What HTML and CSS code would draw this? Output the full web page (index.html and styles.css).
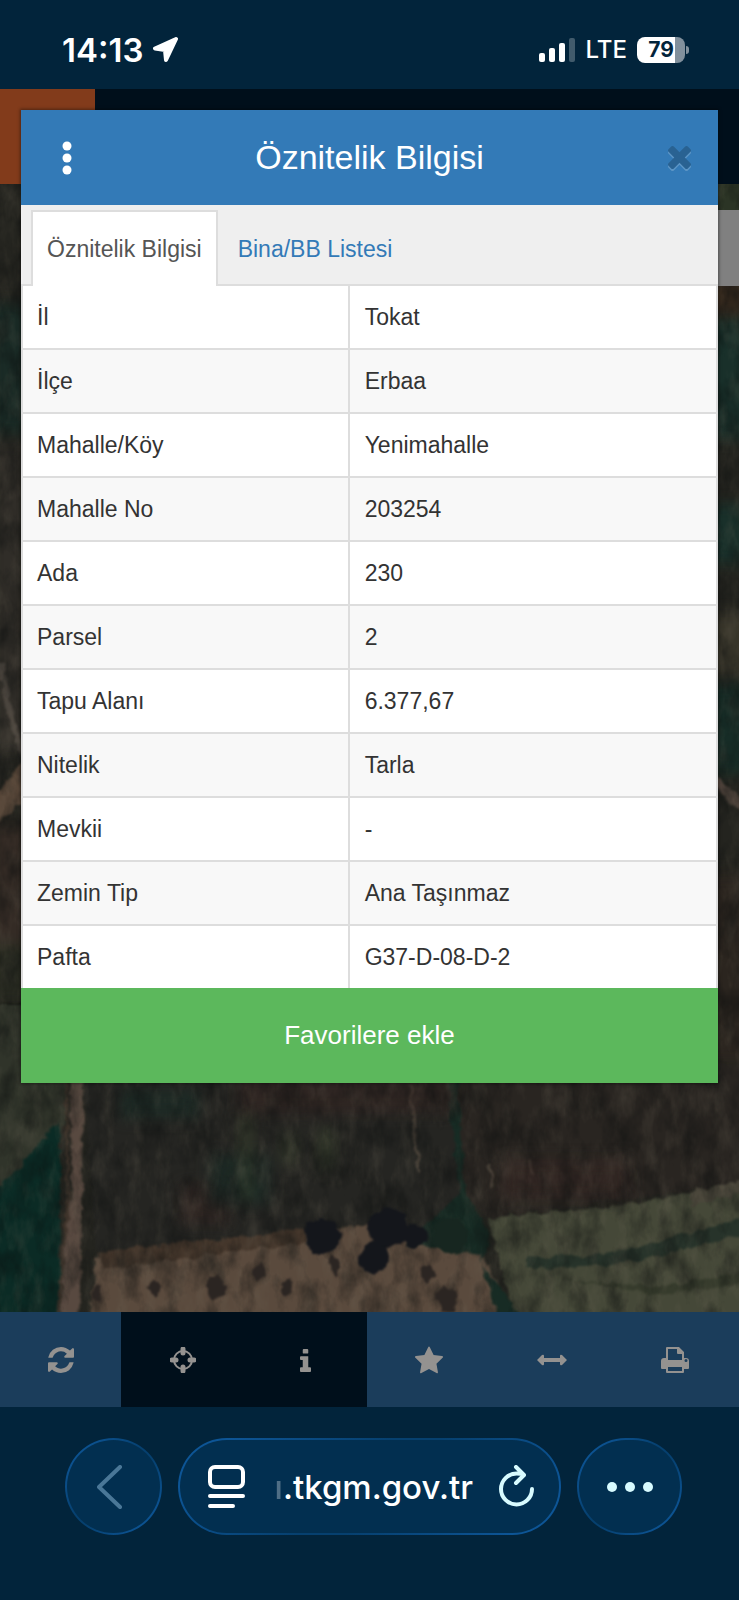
FILE: index.html
```html
<!DOCTYPE html>
<html lang="tr">
<head>
<meta charset="UTF-8">
<meta name="viewport" content="width=device-width, initial-scale=1.0">
<title>Öznitelik Bilgisi</title>
<link rel="stylesheet" href="styles.css">
</head>
<body>

  <header class="status-bar">
    <div class="status-group">
      <span class="clock">14:13</span>
      <svg class="location" viewBox="0 0 25 25"><path d="M23 2 2 11.500 12 13 13 23z"/></svg>
    </div>
    <div class="status-group">
      <svg class="signal" viewBox="0 0 37 24">
        <rect x="0" y="15" width="6" height="9" rx="2"/>
        <rect x="10" y="10" width="6" height="14" rx="2"/>
        <rect x="20" y="5" width="6" height="19" rx="2"/>
        <rect x="30" y="0" width="6" height="24" rx="2" opacity=".25"/>
      </svg>
      <span class="network">LTE</span>
      <div class="battery"><span>79</span></div>
    </div>
  </header>

  <main class="app">
    <div class="navbar"><div class="navbar-logo"></div></div>

    <div class="map">
      <svg class="map-image" viewBox="0 0 739 1128" preserveAspectRatio="xMidYMid slice" aria-hidden="true">
        <defs>
          <filter id="soft" x="-10%" y="-10%" width="120%" height="120%" color-interpolation-filters="sRGB"><feGaussianBlur stdDeviation="7"/></filter>
          <filter id="rough" x="-5%" y="-5%" width="110%" height="110%" color-interpolation-filters="sRGB">
            <feTurbulence type="fractalNoise" baseFrequency="0.09" numOctaves="3" seed="4"/>
            <feDisplacementMap in="SourceGraphic" scale="9" xChannelSelector="R" yChannelSelector="G"/>
            <feGaussianBlur stdDeviation="1"/>
          </filter>
          <filter id="grain" x="0" y="0" width="100%" height="100%" color-interpolation-filters="sRGB">
            <feTurbulence type="fractalNoise" baseFrequency="0.07 0.03" numOctaves="4" seed="8"/>
            <feColorMatrix values="0 0 0 0 0.45  0 0 0 0 0.42  0 0 0 0 0.36  1.6 0 0 0 -0.7"/>
          </filter>
          <filter id="shade" x="0" y="0" width="100%" height="100%" color-interpolation-filters="sRGB">
            <feTurbulence type="fractalNoise" baseFrequency="0.05 0.03" numOctaves="4" seed="21"/>
            <feColorMatrix values="0 0 0 0 0.04  0 0 0 0 0.05  0 0 0 0 0.05  0 2 0 0 -0.8"/>
          </filter>
        </defs>
        <rect width="739" height="1128" fill="#24241f"/>

        <!-- side strips -->
        <g filter="url(#soft)">
          <path fill="#1a2b26" d="M-10 120h40v130h-40z"/>
          <path fill="#302d28" d="M-10 260h40v310h-40z"/>
          <path fill="#342b25" d="M-10 640h40v120h-40z"/>
          <path fill="#2a2c22" d="M-10 760h50v60h-50z"/>
          <path fill="#2b3425" d="M700-10h50v50h-50z"/>
          <path fill="#3b2d20" d="M700 95h50v35h-50z"/>
          <path fill="#19302a" d="M700 135h50v120h-50zM700 320h50v60h-50z"/>
          <path fill="#38352a" d="M700 430h50v60h-50z"/>
          <path fill="#172d27" d="M700 500h50v90h-50z"/>
          <path fill="#2b251f" d="M700 690h50v190h-50z"/>
        </g>
        <g filter="url(#rough)">
          <path fill="#584739" d="M-4 608 26 576v40L-4 640z"/>
          <path fill="none" stroke="#4b453e" stroke-width="6" d="M0 480q12 60 22 90"/>
          <path fill="#5a4c43" d="m712 588 34 30v16l-34-34z"/>
          <path fill="#161a14" d="M0 818h30v4H0z"/>
        </g>

        <!-- fields below the dialog -->
        <g filter="url(#rough)">
          <path fill="#30342a" d="M-5 820h70v120L20 990l-25 20z"/>
          <path fill="#0b2b25" d="M-5 1005 15 988l45-52v200H-5z"/>
          <path fill="#252522" d="M82 880h380v190l-95-30-270 34z"/>
          <path fill="#292521" d="M460 880h290v118l-262 36-30-30z"/>
          <path fill="#5a4a3d" d="M95 1074 230 1058 370 1040 480 1064 516 1140H90z"/>
          <path fill="#44362b" d="M97 1068 230 1054 305 1044v14L105 1085z"/>
          <path fill="#454838" d="M488 1034 600 1024 745 1000v140H516z"/>
          <path fill="#4b473b" d="m690 1008 55-12v12l-55 14z"/>
          <path fill="#27332a" d="M525 1072q70 4 130-14l90-24v16l-88 22q-70 16-132 10z"/>
          <path fill="#363b2c" d="m560 1095 100 8 84-14v10l-84 12z"/>
          <path fill="#172b24" d="m456 890 10 120 24 40-8 30 44 60h-26l-20-70-75-10 55-50-12-110z"/>
          <path fill="#584940" d="M70 880h13l-1 150-3 110H61l5-100 6-40z"/>
          <path fill="none" stroke="#3f342b" stroke-width="3" d="M66 880l2 130-9 120"/>
          <path fill="none" stroke="#4e463c" stroke-width="3" d="m410 900 6 60 4 28M490 980l3 22M528 976l4 14"/>
        </g>
        <g filter="url(#soft)">
          <path fill="#362723" opacity=".6" d="M235 890h220v40H235zM180 1000h50v40h-50zM500 975h130v40H500z"/>
          <path fill="#1b2b25" opacity=".8" d="M120 905h80v30h-80zM210 970h60v50h-60z"/>
          <path fill="#3c4630" opacity=".6" d="M282 950h14v30h-14zM318 945h16v40h-16zM240 930h12v85h-12z"/>
        </g>
        <rect width="739" height="1128" filter="url(#grain)" opacity=".3"/>
        <rect width="739" height="1128" filter="url(#shade)" opacity=".5"/>
        <g filter="url(#rough)" fill="#14161b">
          <circle cx="322" cy="1052" r="18"/>
          <circle cx="388" cy="1044" r="20"/>
          <circle cx="374" cy="1074" r="15"/>
          <circle cx="414" cy="1052" r="12"/>
          <circle cx="450" cy="1052" r="18" fill="#172620"/>
        </g>
        <g filter="url(#rough)" fill="#2b2522">
          <path d="m206 1098 10-8 6 6 4 14-12 8-8-8zM148 1104l6-10 6 8-4 12zM252 1088l8-8 6 10-8 6zM328 1078l6-6 8 12-6 10zM280 1098l10-4 4 16-12 2zM96 1100l6 4-4 14-6-4zM420 1088l8-10 10 14-12 8zM434 1110l10-8 14 6-4 18h-12z"/>
        </g>
      </svg>
      <div class="map-panel"></div>
    </div>

    <nav class="toolbar" aria-label="Harita araçları">
      <button type="button" class="tool" aria-label="Yenile">
        <svg width="26" height="26" viewBox="0 128 1536 1536" fill="currentColor"><path d="M1511 1056q0 5-1 7-64 268-268 434.500t-478 166.500q-146 0-282.500-55t-243.500-157l-129 129q-19 19-45 19t-45-19-19-45v-448q0-26 19-45t45-19h448q26 0 45 19t19 45-19 45l-137 137q71 66 161 102t187 36q134 0 250-65t186-179q11-17 53-117 8-23 30-23h192q13 0 22.500 9.500t9.500 22.500zm25-800v448q0 26-19 45t-45 19h-448q-26 0-45-19t-19-45 19-45l138-138q-148-137-349-137-134 0-250 65t-186 179q-11 17-53 117-8 23-30 23h-199q-13 0-22.500-9.500t-9.500-22.500v-7q65-268 270-434.500t480-166.500q146 0 284 55.500t245 156.500l130-129q19-19 45-19t45 19 19 45z"/></svg>
      </button>
      <button type="button" class="tool active" aria-label="Konum">
        <svg width="26" height="26" viewBox="0 0 26 26" fill="none" stroke="currentColor"><circle cx="13" cy="13" r="9" stroke-width="2"/><path d="M13 2v4M13 20v4M2 13h4M20 13h4" stroke-width="5" stroke-linecap="round"/></svg>
      </button>
      <button type="button" class="tool active" aria-label="Bilgi">
        <svg width="11" height="24" viewBox="0 0 12 26" fill="currentColor"><rect x="3" y="1" width="6" height="5" rx="1"/><path d="M1 9h8v12h2q1 0 1 1v3q0 1-1 1H1q-1 0-1-1v-3q0-1 1-1h2v-8H1q-1 0-1-1v-2q0-1 1-1z"/></svg>
      </button>
      <button type="button" class="tool" aria-label="Favoriler">
        <svg width="28" height="28" viewBox="0 0 1664 1664" fill="currentColor"><path d="M1664 647q0 22-26 48l-363 354 86 500q1 7 1 20 0 21-10.500 35.500t-30.500 14.500q-19 0-40-12l-449-236-449 236q-22 12-40 12-21 0-31.500-14.500t-10.500-35.500q0-6 2-20l86-500-364-354q-25-27-25-48 0-37 56-46l502-73 225-455q19-41 49-41t49 41l225 455 502 73q56 9 56 46z"/></svg>
      </button>
      <button type="button" class="tool" aria-label="Ölçüm">
        <svg width="30" height="12" viewBox="0 0 30 12" fill="currentColor"><path d="M0 6 5 1q2-1 2 1v2h16V2q0-2 2-1l5 5-5 5q-2 1-2-1V8H7v2q0 2-2 1z"/></svg>
      </button>
      <button type="button" class="tool" aria-label="Yazdır">
        <svg width="28" height="26" viewBox="0 0 28 26" fill="currentColor" fill-rule="evenodd"><path d="M6 0h12l5 5v6h2q3 0 3 3v7q0 1-1 1h-4v3q0 1-1 1H6q-1 0-1-1v-3H1q-1 0-1-1v-7q0-3 3-3h2V1q0-1 1-1zm1 2v11h14V7h-4q-1 0-1-1V2zm0 18v4h14v-4zM25 12a1 1 0 1 0 0 3 1 1 0 0 0 0-3z"/></svg>
      </button>
    </nav>

    <section class="modal" role="dialog" aria-labelledby="modal-title">
      <div class="modal-header">
        <button type="button" class="menu-btn" aria-label="Menü">
          <svg width="10" height="34" viewBox="0 0 10 34" fill="currentColor"><circle cx="5" cy="5" r="4.500"/><circle cx="5" cy="17" r="4.500"/><circle cx="5" cy="29" r="4.500"/></svg>
        </button>
        <h1 id="modal-title">Öznitelik Bilgisi</h1>
        <button type="button" class="close-btn" aria-label="Kapat">
          <svg width="23" height="23" viewBox="110 366 1188 1188" fill="currentColor"><path d="M1298 1322q0 40-28 68l-136 136q-28 28-68 28t-68-28l-294-294-294 294q-28 28-68 28t-68-28l-136-136q-28-28-28-68t28-68l294-294-294-294q-28-28-28-68t28-68l136-136q28-28 68-28t68 28l294 294 294-294q28-28 68-28t68 28l136 136q28 28 28 68t-28 68l-294 294 294 294q28 28 28 68z"/></svg>
        </button>
      </div>

      <div class="tabs">
        <a class="tab active" href="#oznitelik">Öznitelik Bilgisi</a>
        <a class="tab" href="#bina">Bina/BB Listesi</a>
      </div>

      <table class="attributes" id="oznitelik">
        <tbody>
          <tr><th scope="row">İl</th><td>Tokat</td></tr>
          <tr><th scope="row">İlçe</th><td>Erbaa</td></tr>
          <tr><th scope="row">Mahalle/Köy</th><td>Yenimahalle</td></tr>
          <tr><th scope="row">Mahalle No</th><td>203254</td></tr>
          <tr><th scope="row">Ada</th><td>230</td></tr>
          <tr><th scope="row">Parsel</th><td>2</td></tr>
          <tr><th scope="row">Tapu Alanı</th><td>6.377,67</td></tr>
          <tr><th scope="row">Nitelik</th><td>Tarla</td></tr>
          <tr><th scope="row">Mevkii</th><td>-</td></tr>
          <tr><th scope="row">Zemin Tip</th><td>Ana Taşınmaz</td></tr>
          <tr><th scope="row">Pafta</th><td>G37-D-08-D-2</td></tr>
        </tbody>
      </table>

      <button type="button" class="favorite-btn">Favorilere ekle</button>
    </section>
  </main>

  <footer class="browser-bar">
    <button type="button" class="glass back" aria-label="Geri">
      <svg width="26" height="44" viewBox="0 0 26 44" fill="none" stroke="currentColor" stroke-width="4" stroke-linecap="round" stroke-linejoin="round"><path d="M23 2 2 22l21 20"/></svg>
    </button>
    <div class="glass address">
      <button type="button" class="icon-btn" aria-label="Sayfa menüsü">
        <svg width="37" height="43" viewBox="0 0 37 43" fill="none" stroke="currentColor" stroke-linecap="round"><rect x="2" y="2" width="33" height="20" rx="5" stroke-width="4"/><path d="M2 31h33M2 41h23" stroke-width="4"/></svg>
      </button>
      <button type="button" class="url"><span class="url-fade">ı</span>.tkgm.gov.tr</button>
      <button type="button" class="icon-btn reload" aria-label="Yeniden yükle">
        <svg width="36" height="43" viewBox="0 0 36 43" fill="none" stroke="currentColor" stroke-width="4" stroke-linecap="round" stroke-linejoin="round"><path d="M33 24A15.500 15.500 0 1 1 17.500 8.500Q22 8.500 25 10M17 2l8 8-8 8"/></svg>
      </button>
    </div>
    <button type="button" class="glass more" aria-label="Diğer">
      <svg width="46" height="10" viewBox="0 0 46 10" fill="currentColor"><circle cx="5" cy="5" r="5"/><circle cx="23" cy="5" r="5"/><circle cx="41" cy="5" r="5"/></svg>
    </button>
  </footer>

</body>
</html>
```

FILE: styles.css
```css
*, *::before, *::after { box-sizing: border-box; margin: 0; padding: 0; }

:root {
  --chrome: #02243b;
  --navy: #000f1b;
  --primary: #337ab7;
  --success: #5cb85c;
  --line: #ddd;
}

body {
  display: flex;
  flex-direction: column;
  min-height: 100vh;
  background: var(--chrome);
  color: #333;
  font-family: 'Liberation Sans', Arial, sans-serif;
  font-size: 23px;
}

button {
  border: 0;
  background: none;
  color: inherit;
  font: inherit;
  cursor: pointer;
}

svg { display: block; }

/* ── STATUS BAR ── */
.status-bar {
  display: flex;
  align-items: center;
  justify-content: space-between;
  height: 89px;
  padding: 10px 50px 0 62px;
  color: #fff;
  font-family: Inter, sans-serif;
}

.status-group {
  display: flex;
  align-items: center;
  gap: 10px;
}

.clock {
  font-size: 33px;
  font-weight: 600;
}

.location {
  width: 25px;
  height: 25px;
  fill: #fff;
  stroke: #fff;
  stroke-width: 4;
  stroke-linejoin: round;
}

.signal {
  width: 37px;
  height: 24px;
  fill: #fff;
}

.network {
  font-size: 24px;
  font-weight: 500;
}

.battery {
  position: relative;
  width: 48px;
  height: 26px;
  margin-right: 4px;
  border-radius: 8px;
  background: linear-gradient(90deg, #fff 79%, #81909c 79%);
  color: var(--chrome);
  font-size: 21px;
  font-weight: 700;
  line-height: 26px;
  text-align: center;
}

.battery::after {
  content: '';
  position: absolute;
  top: 9px;
  right: -4px;
  width: 3px;
  height: 8px;
  border-radius: 0 4px 4px 0;
  background: #81909c;
}

/* ── APP ── */
.app {
  position: relative;
  flex: 1;
  display: flex;
  flex-direction: column;
  min-height: 1200px;
}

.navbar {
  display: flex;
  height: 95px;
  background: var(--navy);
}

.navbar-logo {
  width: 95px;
  background: #823b1b;
}

.map {
  position: relative;
  flex: 1;
  overflow: hidden;
}

.map-image {
  position: absolute;
  inset: 0;
  width: 100%;
  height: 100%;
}

.map-panel {
  position: absolute;
  top: 26px;
  right: 0;
  width: 50%;
  height: 76px;
  background: #808080;
}

.toolbar {
  display: grid;
  grid-template-columns: 121px repeat(5, 1fr);
  height: 95px;
  padding-right: 3px;
  background: #1b3d5b;
  color: #949290;
}

.tool {
  display: flex;
  align-items: center;
  justify-content: center;
}

.tool.active { background: var(--navy); }

/* ── MODAL ── */
.modal {
  position: absolute;
  top: 21px;
  left: 21px;
  right: 21px;
  background: #fff;
  box-shadow: 0 0 3px 1px rgba(0,0,0,0.4);
}

.modal-header {
  display: grid;
  grid-template-columns: 92px 1fr 92px;
  align-items: center;
  height: 95px;
  background: var(--primary);
  color: #fff;
}

.modal-header h1 {
  font-size: 34px;
  font-weight: 400;
  text-align: center;
}

.menu-btn,
.close-btn {
  display: flex;
  align-items: center;
  justify-content: center;
  height: 95px;
}

.close-btn {
  justify-self: end;
  width: 78px;
  color: #296292;
}

.close-btn svg { filter: drop-shadow(0 2px 0 #5c95c5); }

.tabs {
  display: flex;
  gap: 4px;
  padding: 5px 10px 0;
  background: #efefef;
  border-bottom: 2px solid var(--line);
}

.tab {
  margin-bottom: -2px;
  padding: 0 14px;
  border: 2px solid transparent;
  border-bottom: 0;
  color: var(--primary);
  line-height: 74px;
  text-decoration: none;
}

.tab.active {
  background: #fff;
  border-color: var(--line);
  color: #555;
}

.attributes {
  width: 100%;
  border-left: 2px solid var(--line);
  border-spacing: 0;
}

.attributes th,
.attributes td {
  height: 64px;
  padding: 0 14px;
  border-right: 2px solid var(--line);
  border-bottom: 2px solid var(--line);
  font-weight: 400;
  text-align: left;
}

.attributes th { width: 47%; }

.attributes td { padding-left: 15px; }

.attributes tr:nth-child(even) { background: #f8f8f8; }

.attributes tr:last-child th,
.attributes tr:last-child td {
  height: 62px;
  border-bottom: 0;
}

.favorite-btn {
  display: block;
  width: 100%;
  height: 95px;
  background: var(--success);
  color: #fff;
  font-size: 26px;
}

/* ── BROWSER BAR ── */
.browser-bar {
  display: flex;
  gap: 16px;
  height: 193px;
  padding: 31px 57px 0 65px;
  color: #fff;
}

.glass {
  display: flex;
  align-items: center;
  justify-content: center;
  height: 97px;
  border: 2px solid transparent;
  border-radius: 49px;
  background:
    linear-gradient(#022f50, #022f50) padding-box,
    linear-gradient(135deg, #0d5596 10%, #06406f 45%, #06406f 55%, #0d5596 90%) border-box;
}

.back {
  width: 97px;
  padding-right: 8px;
  color: #4a7797;
}

.more {
  width: 105px;
  color: #d8fbff;
}

.address {
  flex: 1;
  justify-content: space-between;
  padding: 0 24px 0 28px;
}

.url {
  flex: 1;
  padding-right: 26px;
  font-family: Inter, sans-serif;
  font-size: 33px;
  font-weight: 500;
  text-align: right;
  white-space: nowrap;
}

.url-fade { opacity: 0.3; }

.reload { color: #d8fbff; }
```
